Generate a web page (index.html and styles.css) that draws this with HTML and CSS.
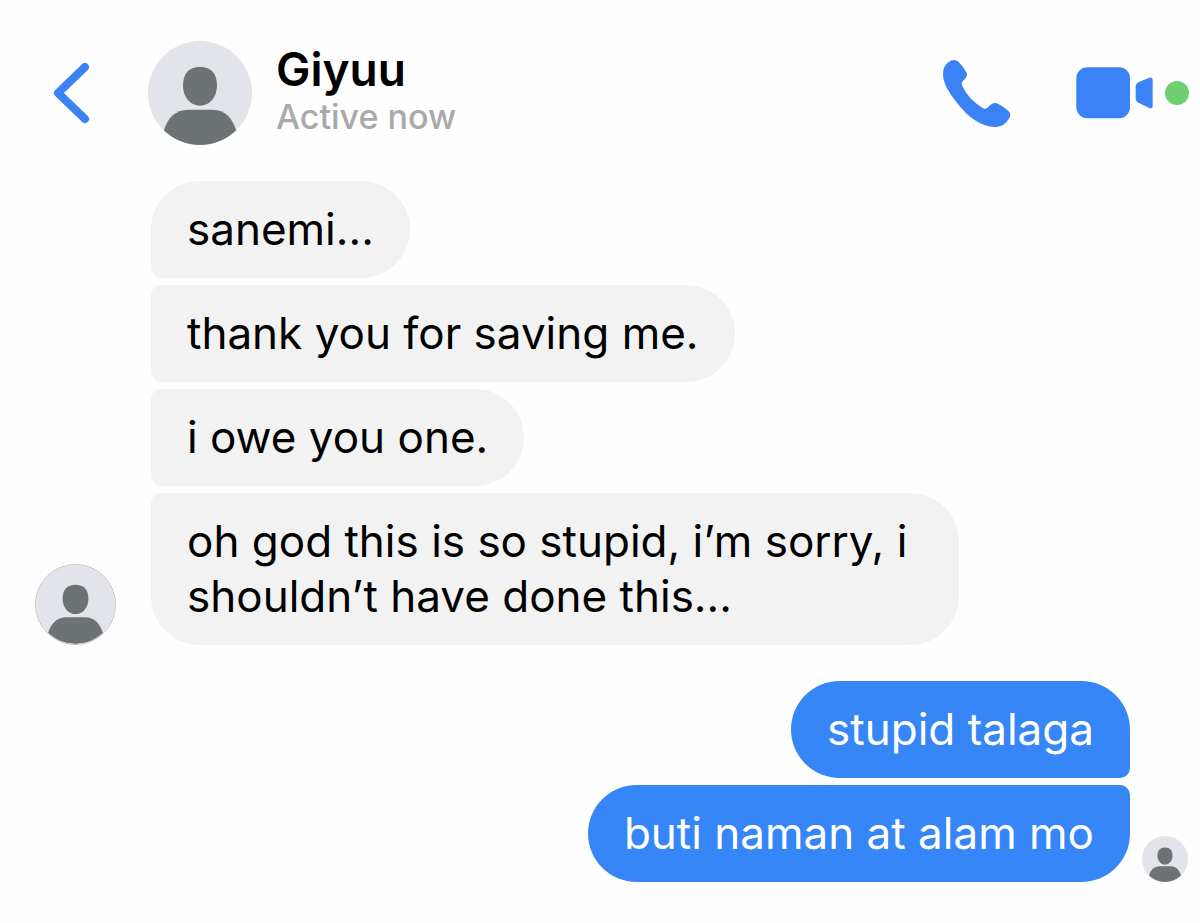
FILE: index.html
```html
<!doctype html>
<html lang="en">
<head>
	<meta charset="UTF-8">
	<meta name="viewport" content="width=device-width, initial-scale=1">
	<title>Giyuu</title>
	<link rel="stylesheet" href="styles.css">
</head>
<body>
	<!-- shared avatar drawing -->
	<svg class="defs" aria-hidden="true">
		<symbol id="person" viewBox="0 0 312 312">
			<clipPath id="round"><circle cx="156" cy="156" r="156"/></clipPath>
			<circle cx="156" cy="156" r="156" fill="#e2e4e9"/>
			<g fill="#6d7275" clip-path="url(#round)">
				<path d="M156 78C190 78 207 98 207 134C207 168 184 194 156 194C128 194 105 168 105 134C105 98 122 78 156 78Z"/>
				<path d="M48 268C58 232 82 206 120 206H194C231 206 254 232 264 268V312H48Z"/>
			</g>
		</symbol>
	</svg>
	<header class="header">
		<button class="back" aria-label="Back">
			<svg width="38" height="62" viewBox="0 0 38 62"><path d="M33 5L6 31L33 57" fill="none" stroke="#3b82f7" stroke-width="8" stroke-linecap="round" stroke-linejoin="round"/></svg>
		</button>
		<svg class="avatar"><use href="#person"/></svg>
		<div class="info">
			<h1 class="name">Giyuu</h1>
			<p class="status">Active now</p>
		</div>
		<button class="call" aria-label="Voice call">
			<svg width="68" height="68" viewBox="0 0 204 204"><path d="M17 9Q34-3 47 9Q62 24 71 41Q74 49 68 57L59 67Q54 73 57 79Q76 122 119 147Q126 151 132 147L146 135Q155 129 165 134Q182 142 197 157Q205 166 199 177Q184 203 159 204C120 205 78 180 43 133C15 96 0 72 0 44Q0 21 17 9Z" fill="#3b82f7"/></svg>
		</button>
		<button class="video" aria-label="Video call">
			<svg width="78" height="52" viewBox="0 0 234 156">
				<rect x="1" y="1" width="161" height="153" rx="33" fill="#3b82f7"/>
				<path d="M187 46L220 32Q230 29 230 39V117Q230 127 220 123L187 107Q179 103 179 95V58Q179 50 187 46Z" fill="#3b82f7"/>
			</svg>
		</button>
		<span class="online"></span>
	</header>
	<main class="chat">
		<section class="group received">
			<svg class="avatar"><use href="#person"/></svg>
			<div class="messages">
				<p class="bubble">sanemi...</p>
				<p class="bubble">thank you for saving me.</p>
				<p class="bubble">i owe you one.</p>
				<p class="bubble">oh god this is so stupid, i’m sorry, i shouldn’t have done this...</p>
			</div>
		</section>
		<section class="group sent">
			<div class="messages">
				<p class="bubble">stupid talaga</p>
				<p class="bubble">buti naman at alam mo</p>
			</div>
			<svg class="avatar"><use href="#person"/></svg>
		</section>
	</main>
</body>
</html>
```
FILE: styles.css
```css
*{
	box-sizing: border-box;
	margin: 0;
	padding: 0;
}
body{
	background: #fefefe;
	color: #000;
	font-family: Inter, "Liberation Sans", sans-serif;
}
button{
	display: block;
	border: 0;
	background: none;
	cursor: pointer;
}
svg{
	display: block;
	flex: none;
}
.defs{
	position: absolute;
	width: 0;
	height: 0;
}
.header{
	display: flex;
	align-items: center;
	padding: 41px 11px 36px 52px;
}
.header .avatar{
	width: 104px;
	height: 104px;
	margin-left: 58px;
}
.info{
	flex: 1;
	margin-left: 24px;
	padding-bottom: 6px;
}
.name{
	font-size: 46px;
	line-height: 54px;
	font-weight: 600;
}
.status{
	font-size: 34px;
	line-height: 42px;
	font-weight: 500;
	color: #a9a9a9;
}
.video{
	margin-left: 65px;
}
.online{
	width: 24px;
	height: 24px;
	margin-left: 11px;
	border-radius: 50%;
	background: #6fce70;
}
.chat{
	display: flex;
	flex-direction: column;
	gap: 36px;
	padding-bottom: 40px;
}
.group{
	display: flex;
	align-items: flex-end;
}
.messages{
	flex: 1;
	display: flex;
	flex-direction: column;
	gap: 7px;
}
.bubble{
	max-width: 77%;
	padding: 21px 36px;
	font-size: 44px;
	line-height: 55px;
	border-radius: 49px;
}
.received{
	gap: 35px;
	padding-left: 35px;
}
.received .avatar{
	width: 81px;
	height: 81px;
	border: 1px solid #bdbdbd;
	border-radius: 50%;
}
.received .messages{
	align-items: flex-start;
}
.received .bubble{
	background: #f2f2f2;
	border-top-left-radius: 10px;
	border-bottom-left-radius: 10px;
}
.received .bubble:first-child{
	border-top-left-radius: 49px;
}
.received .bubble:last-child{
	border-bottom-left-radius: 49px;
}
.sent{
	gap: 12px;
	padding-right: 12px;
}
.sent .avatar{
	width: 46px;
	height: 46px;
}
.sent .messages{
	align-items: flex-end;
}
.sent .bubble{
	background: #3686f8;
	color: #fff;
	border-top-right-radius: 10px;
	border-bottom-right-radius: 10px;
}
.sent .bubble:first-child{
	border-top-right-radius: 49px;
}
.sent .bubble:last-child{
	border-bottom-right-radius: 49px;
}
```
